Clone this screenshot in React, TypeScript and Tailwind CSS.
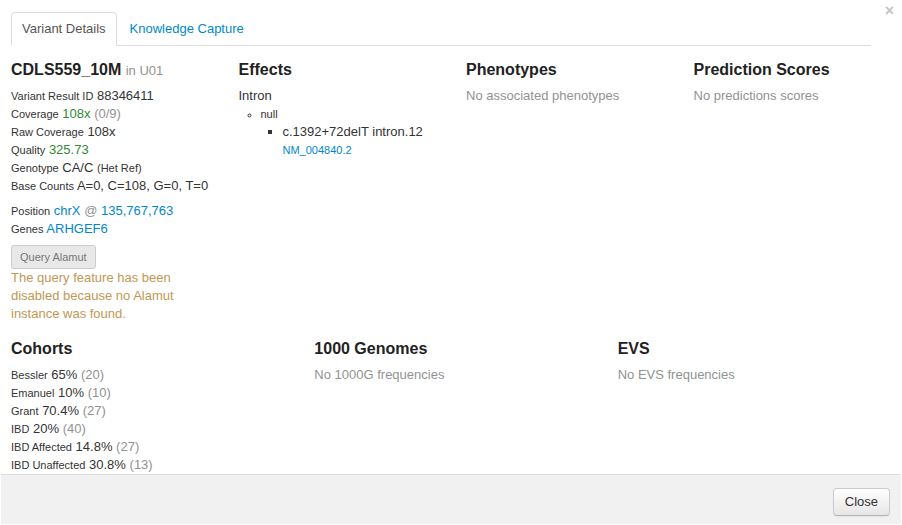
import type { ReactNode } from "react";

type Cohort = { name: string; percent: string; size: number };

const cohorts: Cohort[] = [
  { name: "Bessler", percent: "65%", size: 20 },
  { name: "Emanuel", percent: "10%", size: 10 },
  { name: "Grant", percent: "70.4%", size: 27 },
  { name: "IBD", percent: "20%", size: 40 },
  { name: "IBD Affected", percent: "14.8%", size: 27 },
  { name: "IBD Unaffected", percent: "30.8%", size: 13 },
];

function Heading({ children }: { children: ReactNode }) {
  return <h4 className="mb-2 text-base leading-[18px] font-bold text-[#222]">{children}</h4>;
}

function Small({ children }: { children: ReactNode }) {
  return <small className="text-[11px] leading-none">{children}</small>;
}

function Muted({ children }: { children: ReactNode }) {
  return <span className="text-[#929292]">{children}</span>;
}

function Link({ children }: { children: ReactNode }) {
  return (
    <a href="#" className="text-[#0088cc]">
      {children}
    </a>
  );
}

export default function App() {
  return (
    <div className="relative bg-white font-['Liberation_Sans',Arial,sans-serif] text-[13px] leading-[18px] text-[#333]">
      <button
        type="button"
        aria-label="Dismiss"
        className="absolute top-0.5 right-2 text-base leading-[18px] font-bold text-[#c4c4c4]"
      >
        ×
      </button>

      <div className="px-[11px] pt-3">
        <nav className="mr-5 flex border-b border-[#ddd]">
          <a
            href="#"
            className="-mb-px rounded-t border border-[#ddd] border-b-white bg-white px-[10px] pt-[7px] pb-[7px] text-[#555]"
          >
            Variant Details
          </a>
          <a href="#" className="px-[13px] pt-2 pb-[7px] text-[#0088cc]">
            Knowledge Capture
          </a>
        </nav>

        <div className="mt-[15px] grid grid-cols-4 gap-x-[30px]">
          <section>
            <Heading>
              CDLS559_10M <span className="text-[13px] leading-none font-normal text-[#929292]">in U01</span>
            </Heading>
            <ul className="whitespace-nowrap">
              <li><Small>Variant Result ID</Small> 88346411</li>
              <li><Small>Coverage</Small> <span className="text-[#338833]">108x</span> <Muted>(0/9)</Muted></li>
              <li><Small>Raw Coverage</Small> 108x</li>
              <li><Small>Quality</Small> <span className="text-[#338833]">325.73</span></li>
              <li><Small>Genotype</Small> CA/C <Small>(Het Ref)</Small></li>
              <li><Small>Base Counts</Small> A=0, C=108, G=0, T=0</li>
            </ul>
            <ul className="mt-[7px]">
              <li><Small>Position</Small> <Link>chrX</Link> <Muted>@</Muted> <Link>135,767,763</Link></li>
              <li><Small>Genes</Small> <Link>ARHGEF6</Link></li>
            </ul>
            <button
              type="button"
              disabled
              className="mt-[7px] block rounded-[3px] border border-[#ccc] bg-[#e8e8e8] px-2 py-0.5 text-[11px] leading-[18px] text-[#777]"
            >
              Query Alamut
            </button>
            <p className="text-[#c09853]">
              The query feature has been disabled because no Alamut instance was found.
            </p>
          </section>

          <section>
            <Heading>Effects</Heading>
            <p>Intron</p>
            <ul className="list-[circle] pl-[22px]">
              <li className="text-[11px] leading-[18px]">
                null
                <ul className="list-[square] pl-[22px] whitespace-nowrap">
                  <li className="text-[13px] leading-[18px]">
                    c.1392+72delT intron.12
                    <div className="text-[11px] leading-[18px]">
                      <Link>NM_004840.2</Link>
                    </div>
                  </li>
                </ul>
              </li>
            </ul>
          </section>

          <section>
            <Heading>Phenotypes</Heading>
            <p className="text-[#929292]">No associated phenotypes</p>
          </section>

          <section>
            <Heading>Prediction Scores</Heading>
            <p className="text-[#929292]">No predictions scores</p>
          </section>
        </div>

        <div className="mt-[17px] grid grid-cols-3 gap-x-[30px]">
          <section>
            <Heading>Cohorts</Heading>
            <ul>
              {cohorts.map((c) => (
                <li key={c.name}>
                  <Small>{c.name}</Small> {c.percent} <Muted>({c.size})</Muted>
                </li>
              ))}
            </ul>
          </section>

          <section>
            <Heading>1000 Genomes</Heading>
            <p className="text-[#929292]">No 1000G frequencies</p>
          </section>

          <section>
            <Heading>EVS</Heading>
            <p className="text-[#929292]">No EVS frequencies</p>
          </section>
        </div>
      </div>

      <footer className="mx-px flex justify-end border-t border-[#ddd] bg-[#f1f1f1] px-[11px] pt-[13px] pb-2">
        <button
          type="button"
          className="rounded border border-[#ccc] border-b-[#b3b3b3] bg-linear-to-b from-white to-[#e6e6e6] px-[11px] py-1 leading-[18px] shadow-xs"
        >
          Close
        </button>
      </footer>
    </div>
  );
}
